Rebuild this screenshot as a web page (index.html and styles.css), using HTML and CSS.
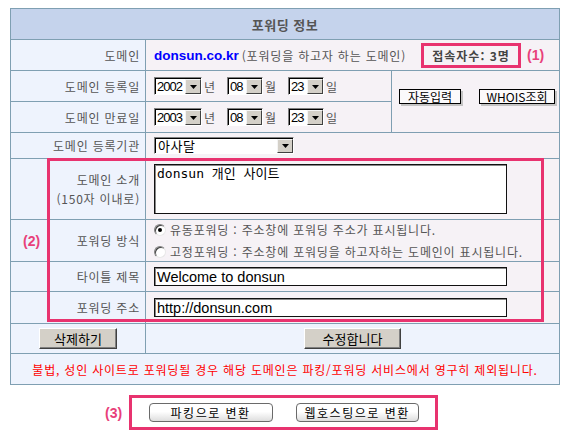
FILE: index.html
```html
<!DOCTYPE html>
<html lang="ko">
<head>
<meta charset="utf-8">
<title>포워딩 정보</title>
<link rel="stylesheet" href="styles.css">
</head>
<body>
<div class="info">
  <div class="hd">포워딩 정보</div>

  <div class="lb">도메인</div>
  <div class="val c2 dom">
    <div class="dom-main"><b class="dname">donsun.co.kr</b><span class="dnote">(포워딩을 하고자 하는 도메인)</span></div>
    <div class="mark1">접속자수: 3명</div>
    <span class="ann ann1">(1)</span>
  </div>

  <div class="lb">도메인 등록일</div>
  <div class="val date">
    <span class="sel w48"><span class="v">2002</span><span class="arr"><svg width="7" height="4" viewBox="0 0 7 4"><polygon points="0,0 7,0 3.5,4" fill="#000"/></svg></span></span><span class="unit">년</span>
    <span class="sel w36"><span class="v">08</span><span class="arr"><svg width="7" height="4" viewBox="0 0 7 4"><polygon points="0,0 7,0 3.5,4" fill="#000"/></svg></span></span><span class="unit">월</span>
    <span class="sel w36"><span class="v">23</span><span class="arr"><svg width="7" height="4" viewBox="0 0 7 4"><polygon points="0,0 7,0 3.5,4" fill="#000"/></svg></span></span><span class="unit last">일</span>
  </div>
  <div class="val r2 tools">
    <button class="tbtn w62">자동입력</button>
    <button class="tbtn w76">WHOIS조회</button>
  </div>

  <div class="lb">도메인 만료일</div>
  <div class="val date">
    <span class="sel w48"><span class="v">2003</span><span class="arr"><svg width="7" height="4" viewBox="0 0 7 4"><polygon points="0,0 7,0 3.5,4" fill="#000"/></svg></span></span><span class="unit">년</span>
    <span class="sel w36"><span class="v">08</span><span class="arr"><svg width="7" height="4" viewBox="0 0 7 4"><polygon points="0,0 7,0 3.5,4" fill="#000"/></svg></span></span><span class="unit">월</span>
    <span class="sel w36"><span class="v">23</span><span class="arr"><svg width="7" height="4" viewBox="0 0 7 4"><polygon points="0,0 7,0 3.5,4" fill="#000"/></svg></span></span><span class="unit last">일</span>
  </div>

  <div class="lb">도메인 등록기관</div>
  <div class="val c2">
    <span class="sel w140 h17"><span class="v kr">아사달</span><span class="arr"><svg width="7" height="4" viewBox="0 0 7 4"><polygon points="0,0 7,0 3.5,4" fill="#000"/></svg></span></span>
  </div>

  <div class="lb two"><span>도메인 소개</span><span>(150자 이내로)</span></div>
  <div class="val c2">
    <textarea class="ta" rows="3">donsun 개인 사이트</textarea>
  </div>

  <div class="lb split"><span class="ann ann2">(2)</span><span>포워딩 방식</span></div>
  <div class="val c2 radios">
    <div class="ropt"><span class="radio on"></span>유동포워딩 : 주소창에 포워딩 주소가 표시됩니다.</div>
    <div class="ropt"><span class="radio"></span>고정포워딩 : 주소창에 포워딩을 하고자하는 도메인이 표시됩니다.</div>
  </div>

  <div class="lb">타이틀 제목</div>
  <div class="val c2"><input class="tx" type="text" value="Welcome to donsun"></div>

  <div class="lb">포워딩 주소</div>
  <div class="val c2"><input class="tx" type="text" value="http://donsun.com"></div>

  <div class="act"><button class="wbtn w78">삭제하기</button></div>
  <div class="act c2"><button class="wbtn w97">수정합니다</button></div>

  <div class="warn">불법, 성인 사이트로 포워딩될 경우 해당 도메인은 파킹/포워딩 서비스에서 영구히 제외됩니다.</div>

  <div class="mark2"></div>
</div>

<div class="conv">
  <span class="ann ann3">(3)</span>
  <div class="mark3">
    <button class="rbtn w124">파킹으로 변환</button>
    <button class="rbtn w123">웹호스팅으로 변환</button>
  </div>
</div>
</body>
</html>
```
FILE: styles.css
```css
body {
  margin: 0;
  padding: 8px 0 0 10px;
  font-family: "Noto Sans CJK KR", sans-serif;
  font-size: 12px;
  color: #555;
  background: #fff;
}

.info {
  position: relative;
  display: grid;
  box-sizing: border-box;
  width: 550px;
  padding: 1px;
  gap: 1px;
  background: #7f9fb2;
  grid-template-columns: 134px 245px 167px;
  grid-template-rows: 30px 30px 30px 30px 25px 60px 41px 29px 31px 29px 30px;
}

.hd {
  grid-column: 1 / -1;
  background: #c5d3ec;
  display: flex;
  align-items: center;
  justify-content: center;
  font-weight: bold;
  font-size: 13px;
  letter-spacing: 0.5px;
  color: #555;
}

.lb {
  background: #eef3fd;
  display: flex;
  align-items: center;
  justify-content: flex-end;
  padding-right: 5px;
  white-space: nowrap;
  letter-spacing: 0.8px;
}

.lb.two {
  flex-direction: column;
  align-items: flex-end;
  justify-content: center;
  line-height: 19px;
}

.lb.split {
  justify-content: space-between;
  padding-left: 12px;
}

.val {
  background: #f6f2f6;
  display: flex;
  align-items: center;
  padding-left: 8px;
  white-space: nowrap;
}

.c2 { grid-column: span 2; }
.r2 { grid-row: span 2; }

/* domain row */
.dom-main {
  width: 267px;
  display: flex;
  align-items: center;
}
.dname {
  font-family: "Liberation Sans", sans-serif;
  font-size: 13.5px;
  font-weight: bold;
  color: #0000ff;
  margin-right: 3px;
}
.dnote { letter-spacing: 0.8px; }

.mark1 {
  box-sizing: border-box;
  width: 100px;
  height: 25px;
  border: 3px solid #e8336f;
  display: flex;
  align-items: center;
  justify-content: center;
  font-weight: bold;
  letter-spacing: 1px;
  color: #444;
}

.ann {
  font-family: "Liberation Sans", sans-serif;
  font-weight: bold;
  color: #e8407a;
  font-size: 14px;
  letter-spacing: 0;
}
.ann1 { margin-left: 6px; }

/* selects */
.sel {
  display: inline-flex;
  box-sizing: border-box;
  height: 18px;
  padding: 1px 0 0 1px;
  border: 1px solid;
  border-color: #808080 #fff #fff #808080;
  box-shadow: inset 1px 1px 0 #000;
  background: #fff;
}
.sel.h17 { height: 17px; }
.w48 { width: 48px; }
.w36 { width: 36px; }
.w140 { width: 140px; }

.sel .v {
  flex: 1;
  font-family: "Liberation Sans", sans-serif;
  font-size: 13px;
  letter-spacing: -1px;
  line-height: 15px;
  padding-left: 1px;
  color: #000;
}
.sel .v.kr {
  font-family: "Noto Sans CJK KR", sans-serif;
  letter-spacing: 0.5px;
  line-height: 14px;
  padding-left: 2px;
}
.sel .arr {
  box-sizing: border-box;
  width: 16px;
  border: 1px solid;
  border-color: #f4f4f4 #404040 #404040 #f4f4f4;
  background: #d4d0c8;
  display: flex;
  align-items: center;
  justify-content: center;
}

.unit { margin: 0 12px 0 2px; }
.unit.last { margin-right: 0; }

/* tools */
.tools {
  align-items: flex-start;
  padding-top: 18px;
  padding-left: 7px;
  gap: 18px;
}
.tbtn {
  box-sizing: border-box;
  height: 15px;
  padding: 0;
  border: 1px solid #000;
  background: #fbfafb;
  box-shadow: 2px 2px 0 #c4c4c4;
  font-family: "Noto Sans CJK KR", sans-serif;
  font-size: 12px;
  line-height: 13px;
  color: #000;
}
.w62 { width: 62px; }
.w76 { width: 76px; }

/* textarea & inputs */
.ta {
  box-sizing: border-box;
  width: 353px;
  height: 50px;
  margin: 0;
  padding: 1px 2px;
  border: 1px solid #111;
  box-shadow: inset 1px 1px 0 #888;
  background: #fff;
  color: #000;
  font-family: "DejaVu Sans Mono", "Noto Sans CJK KR", monospace;
  font-size: 13px;
  line-height: 16px;
  resize: none;
  overflow: hidden;
}

.tx {
  box-sizing: border-box;
  width: 353px;
  height: 19px;
  margin: 0;
  padding: 0 2px;
  border: 1px solid #111;
  box-shadow: inset 1px 1px 0 #888;
  background: #fff;
  color: #000;
  font-family: "Liberation Sans", sans-serif;
  font-size: 14.5px;
}

/* radios */
.radios {
  flex-direction: column;
  align-items: flex-start;
  justify-content: center;
  line-height: 22px;
  letter-spacing: 0.8px;
}
.ropt {
  display: flex;
  align-items: center;
}
.radio {
  box-sizing: border-box;
  width: 12px;
  height: 12px;
  margin-right: 4px;
  border-radius: 50%;
  border: 1px solid;
  border-color: #808080 #e8e8e8 #e8e8e8 #808080;
  box-shadow: inset 1px 1px 0 #404040;
  background: #fff;
  display: flex;
  align-items: center;
  justify-content: center;
}
.radio.on::after {
  content: "";
  width: 4px;
  height: 4px;
  border-radius: 50%;
  background: #000;
}

/* action row */
.act {
  background: #eef3fd;
  display: flex;
  align-items: center;
  justify-content: center;
}
.wbtn {
  box-sizing: border-box;
  height: 21px;
  padding: 0;
  border: 1px solid;
  border-color: #fff #404040 #404040 #fff;
  box-shadow: inset -1px -1px 0 #808080;
  background: #d4d0c8;
  font-family: "Noto Sans CJK KR", sans-serif;
  font-size: 13px;
  line-height: 17px;
  color: #000;
}
.w78 { width: 78px; }
.w97 { width: 97px; }

.warn {
  grid-column: 1 / -1;
  background: #eef3fd;
  display: flex;
  align-items: center;
  justify-content: center;
  color: #ff0000;
  white-space: nowrap;
  letter-spacing: 0.8px;
}

.mark2 {
  position: absolute;
  left: 37px;
  top: 150px;
  width: 497px;
  height: 164px;
  box-sizing: border-box;
  border: 3px solid #e8336f;
  pointer-events: none;
}

/* conversion row */
.conv {
  display: flex;
  align-items: center;
  margin-top: 10px;
  padding-left: 95px;
  gap: 7px;
}
.mark3 {
  box-sizing: border-box;
  width: 309px;
  height: 35px;
  border: 3px solid #e8336f;
  display: flex;
  align-items: center;
  justify-content: center;
  gap: 23px;
}
.rbtn {
  box-sizing: border-box;
  height: 19px;
  padding: 0;
  border: 1px solid #6a6a6a;
  border-radius: 4px;
  background: linear-gradient(#ffffff 0%, #ffffff 45%, #dedede 100%);
  font-family: "Noto Sans CJK KR", sans-serif;
  font-size: 12px;
  letter-spacing: 1.5px;
  line-height: 16px;
  color: #000;
}
.w124 { width: 124px; }
.w123 { width: 123px; }
```
